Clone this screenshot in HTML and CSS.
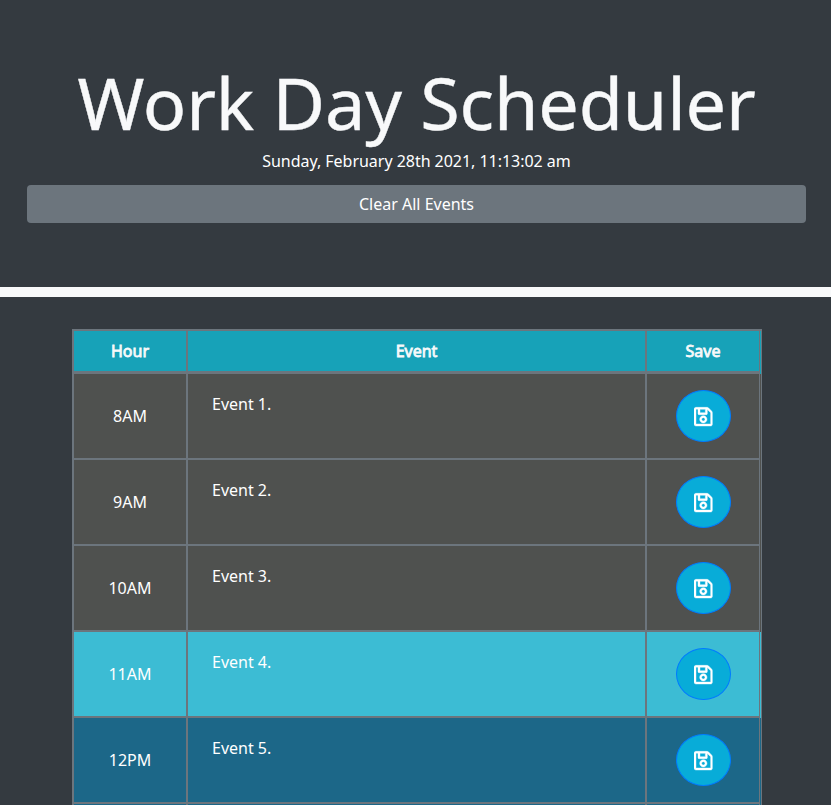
FILE: index.html
```html
<!DOCTYPE html>
<html lang="en">
<head>
<meta charset="utf-8">
<title>Work Day Scheduler</title>
<link rel="stylesheet" href="styles.css">
</head>
<body>
<svg class="symbols" aria-hidden="true"><symbol id="save" viewBox="0 0 448 512"><path d="M433.941 129.941l-83.882-83.882A48 48 0 0 0 316.118 32H48C21.490 32 0 53.490 0 80v352c0 26.510 21.490 48 48 48h352c26.510 0 48-21.490 48-48V163.882a48 48 0 0 0-14.059-33.941zM272 80v80H144V80h128zm122 352H54a6 6 0 0 1-6-6V86a6 6 0 0 1 6-6h42v104c0 13.255 10.745 24 24 24h176c13.255 0 24-10.745 24-24V83.882l78.243 78.243a6 6 0 0 1 1.757 4.243V426a6 6 0 0 1-6 6zM224 232c-48.523 0-88 39.477-88 88s39.477 88 88 88 88-39.477 88-88-39.477-88-88-88zm0 128c-22.056 0-40-17.944-40-40s17.944-40 40-40 40 17.944 40 40-17.944 40-40 40z"/></symbol></svg>
<header class="hero">
<h1>Work Day Scheduler</h1>
<p>Sunday, February 28th 2021, 11:13:02 am</p>
<button class="clear">Clear All Events</button>
</header>
<main class="schedule">
<table>
<thead><tr><th class="hour">Hour</th><th>Event</th><th class="save">Save</th></tr></thead>
<tbody>
<tr class="past"><td>8AM</td><td class="event">Event 1.</td><td><button class="disk"><svg><use href="#save"/></svg></button></td></tr>
<tr class="past"><td>9AM</td><td class="event">Event 2.</td><td><button class="disk"><svg><use href="#save"/></svg></button></td></tr>
<tr class="past"><td>10AM</td><td class="event">Event 3.</td><td><button class="disk"><svg><use href="#save"/></svg></button></td></tr>
<tr class="present"><td>11AM</td><td class="event">Event 4.</td><td><button class="disk"><svg><use href="#save"/></svg></button></td></tr>
<tr class="future"><td>12PM</td><td class="event">Event 5.</td><td><button class="disk"><svg><use href="#save"/></svg></button></td></tr>
<tr class="future"><td></td><td class="event"></td><td></td></tr>
</tbody>
</table>
</main>
</body>
</html>
```
FILE: styles.css
```css
* { box-sizing: border-box; }
html, body { height: 100%; }
body { margin: 0; overflow: hidden; background: #f8f9fa; color: #fff; font: 16px/24px "Noto Sans", sans-serif; display: flex; flex-direction: column; }
.symbols { display: none; }
.hero { flex: none; height: 287px; padding: 58px 25px 0 27px; background: #343a40; text-align: center; }
h1 { margin: 0 0 3px; color: #f8f9fa; font-size: 72px; font-weight: 400; line-height: 88px; letter-spacing: -.17px; white-space: nowrap; -webkit-text-stroke: .4px #f8f9fa; }
p { margin: 0 0 12px; letter-spacing: -.03px; }
button { font: inherit; color: inherit; }
.clear { display: block; width: 100%; height: 38px; padding: 0; border: 0; border-radius: 4px; background: #6c757d; }
.schedule { flex: 1; min-height: 0; margin-top: 10px; padding: 32px 69px 0 72px; background: #343a40; overflow: hidden; }
table { width: 690px; table-layout: fixed; border-collapse: separate; border-spacing: 0; text-align: center; }
th, td { --rule: 2px; border: solid #6c757d; border-width: 0 0 2px 2px; padding: 0; }
th { --rule: 3px; height: 45px; border-width: 2px 0 3px 2px; background-color: #17a2b8; color: #f8f9fa; font-weight: 400; -webkit-text-stroke: .8px #f8f9fa; }
td { height: 86px; }
.hour { width: 114px; }
.save { width: 117px; }
/* The right edge is a pair of hairlines with the row colour between them. */
th:last-child, td:last-child {
  border-right-width: 1px;
  border-bottom-width: 0;
  padding: 0 2px var(--rule) 0;
  background-image: linear-gradient(#6c757d, #6c757d), linear-gradient(#6c757d, #6c757d);
  background-size: 1px 100%, calc(100% - 1px) var(--rule);
  background-position: right 1px top, left bottom;
  background-repeat: no-repeat;
  background-origin: padding-box;
  background-clip: padding-box;
}
.event { padding: 18px 24px; text-align: left; vertical-align: top; }
.past td { background-color: #4f514f; }
.present td { background-color: #3cbcd4; }
.future td { background-color: #1c6788; }
.disk { display: inline-flex; align-items: center; justify-content: center; width: 55px; height: 52px; padding: 1px 0 0; border: 1px solid #007bff; border-radius: 50%; background: #08acd8; vertical-align: middle; }
.disk svg { width: 18.67px; height: 21.33px; overflow: visible; fill: #fff; stroke: #fff; stroke-width: 10; }
```
